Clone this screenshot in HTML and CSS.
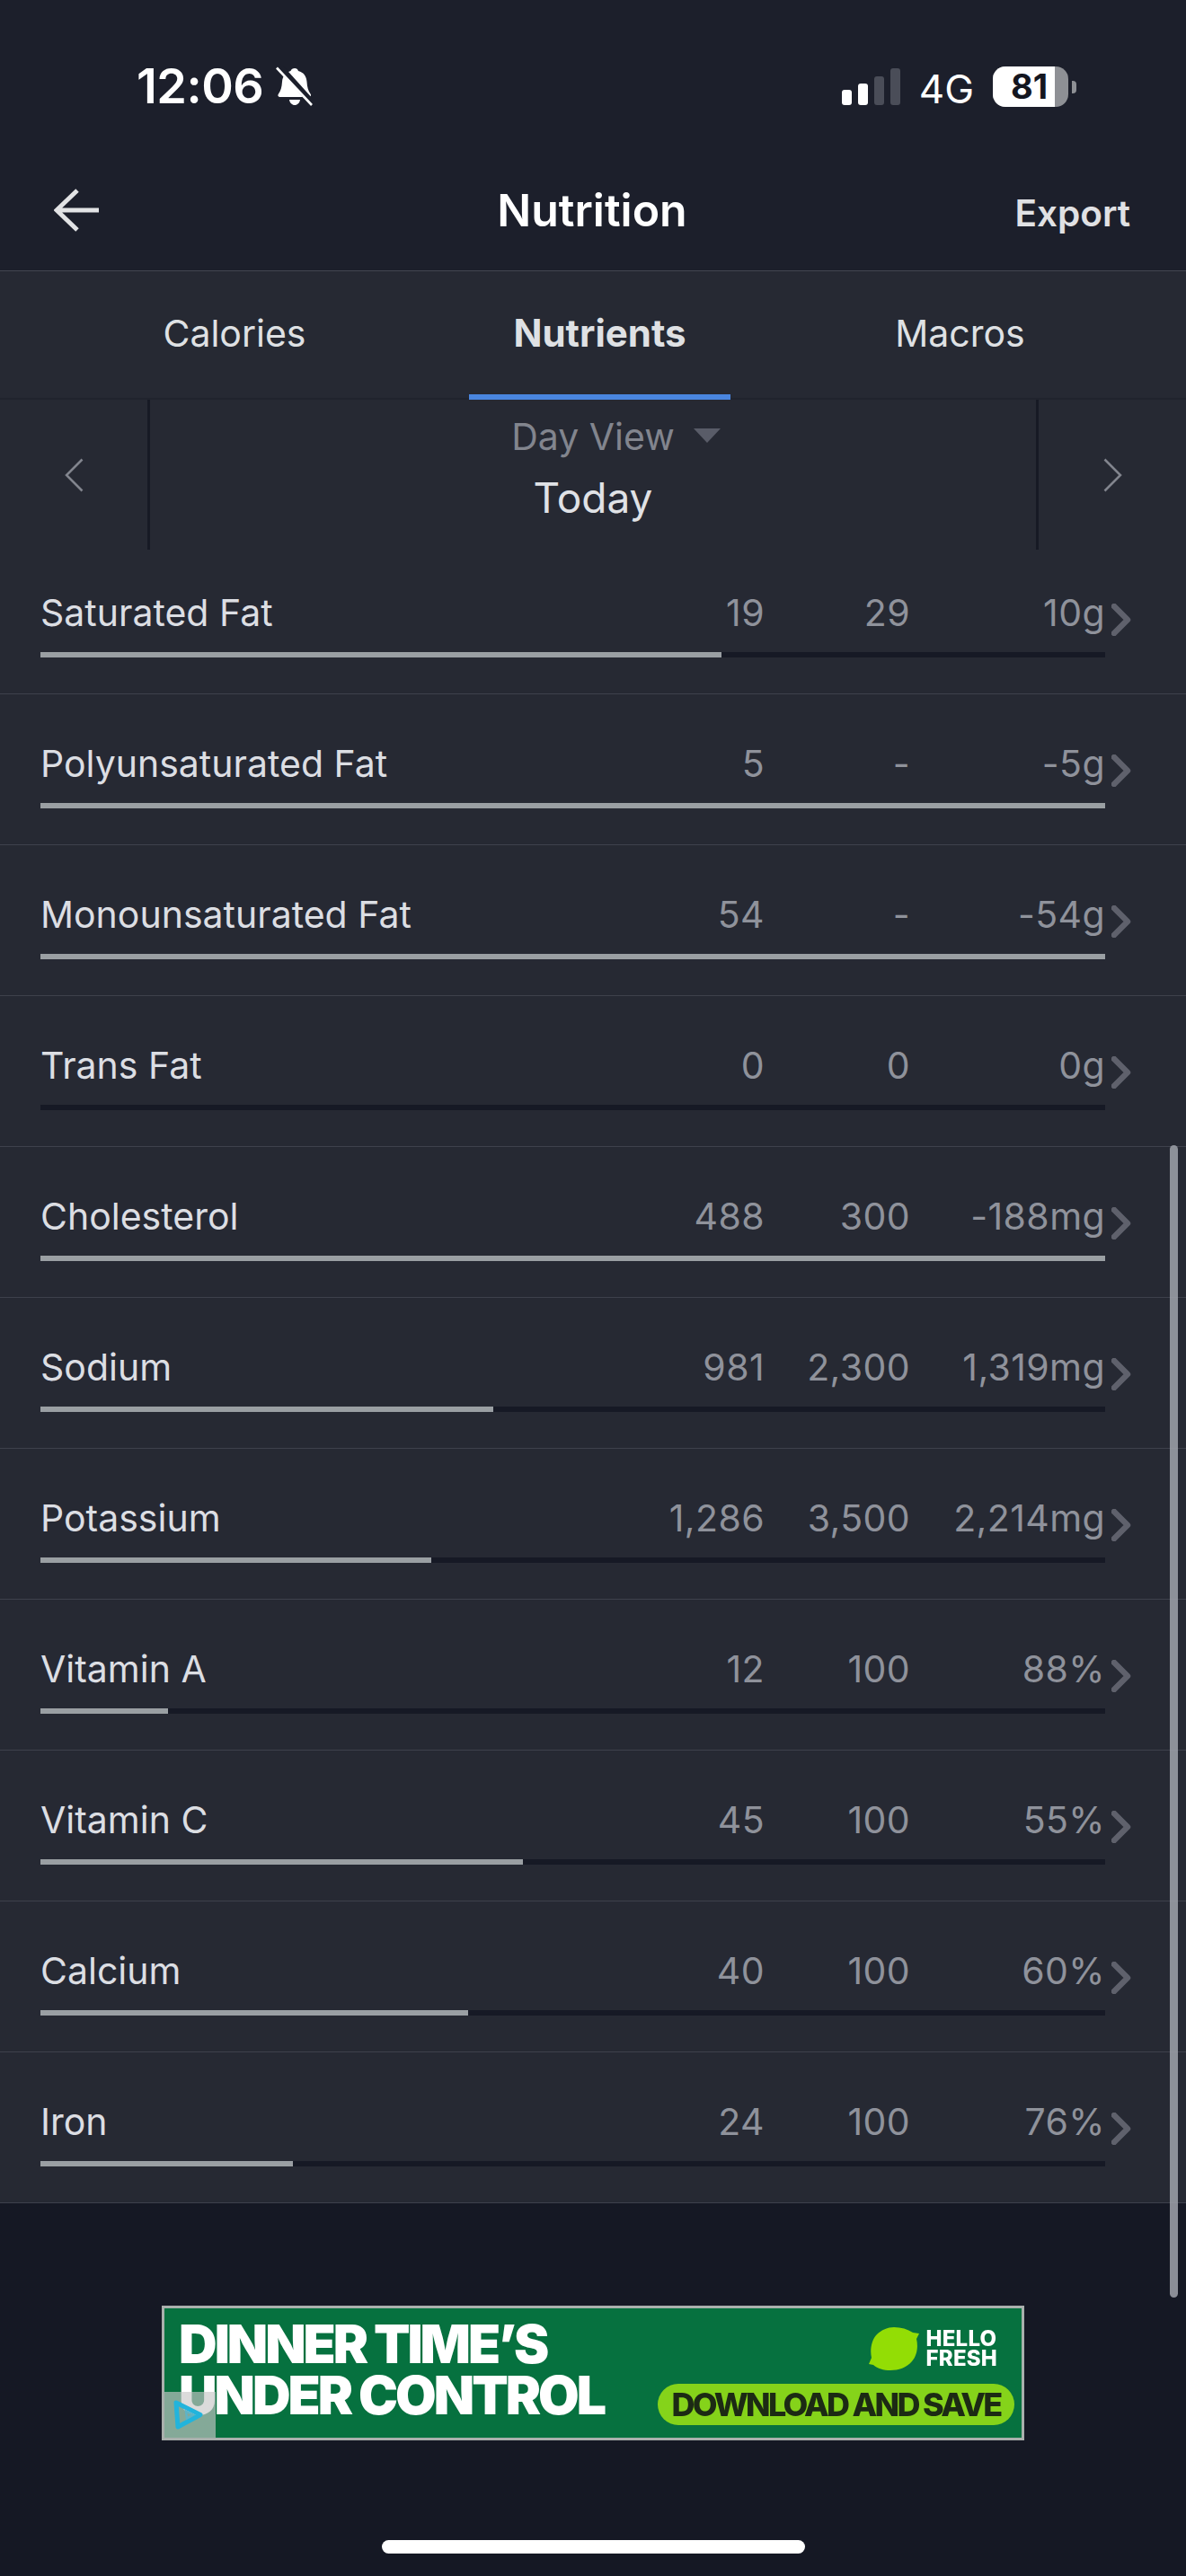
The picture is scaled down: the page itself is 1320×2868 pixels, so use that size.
FILE: index.html
```html
<!DOCTYPE html>
<html lang="en">
<head>
    <meta charset="UTF-8">
    <meta name="viewport" content="width=device-width, initial-scale=1.0">
    <title>Nutrition</title>
    <link rel="stylesheet" href="styles.css">
</head>
<body>
    <div class="app">
        <header class="header">
            <div class="status">
                <div class="status-left">
                    <span class="time">12:06</span>
                    <svg class="bell" viewBox="0 0 42 44">
                        <path d="M21 2c2 0 3.500 1 4 3 6 1.500 9 6 9.500 12 .4 6 1.500 10 4 13.500 1.500 2-.5 3.500-2 3.500H5c-2 0-3.500-1.500-2-3.500 2.500-3.500 3.600-7.500 4-13.500C7.500 11 11 6.500 16.500 5c.5-2 2.500-3 4.500-3z" fill="#fff"/>
                        <path d="M15 37h12c-.5 3.500-3 6-6 6s-5.500-2.500-6-6z" fill="#fff"/>
                        <path d="M4 0l37 41" stroke="#1c1f2b" stroke-width="7"/>
                        <path d="M1 1.500l39 41.500" stroke="#fff" stroke-width="2.600"/>
                    </svg>
                </div>
                <div class="status-right">
                    <div class="signal">
                        <span class="sig sig-1"></span>
                        <span class="sig sig-2"></span>
                        <span class="sig sig-3"></span>
                        <span class="sig sig-4"></span>
                    </div>
                    <span class="network">4G</span>
                    <div class="battery"><span class="battery-level">81</span></div>
                    <span class="battery-nub"></span>
                </div>
            </div>
            <div class="nav">
                <svg class="back" viewBox="0 0 50 48">
                    <path d="M26 2L3 24l23 22M3 24h47" fill="none" stroke="#e2e3e5" stroke-width="5"/>
                </svg>
                <h1 class="title">Nutrition</h1>
                <span class="export">Export</span>
            </div>
        </header>

        <nav class="tabs">
            <div class="tab tab-calories">Calories</div>
            <div class="tab tab-active">Nutrients</div>
            <div class="tab tab-macros">Macros</div>
        </nav>

        <div class="date-bar">
            <div class="date-btn date-prev">
                <svg class="date-arrow" viewBox="0 0 21 38"><path d="M19.500 1.500L2 19l17.500 17.500" /></svg>
            </div>
            <div class="date-info">
                <div class="date-view">Day View<span class="caret"></span></div>
                <div class="date-day">Today</div>
            </div>
            <div class="date-btn date-next">
                <svg class="date-arrow" viewBox="0 0 21 38"><path d="M1.500 1.500L19 19 1.500 36.500" /></svg>
            </div>
        </div>

        <div class="list">
            <div class="row row-first">
                <div class="row-text"><span class="name">Saturated Fat</span><span class="val">19</span><span class="val">29</span><span class="val val-left">10g</span></div>
                <svg class="chev" viewBox="0 0 22 36"><path d="M3 3l15 15L3 33"/></svg>
                <div class="bar"><div class="fill" style="width: 64%"></div></div>
            </div>
            <div class="row">
                <div class="row-text"><span class="name">Polyunsaturated Fat</span><span class="val">5</span><span class="val">-</span><span class="val val-left">-5g</span></div>
                <svg class="chev" viewBox="0 0 22 36"><path d="M3 3l15 15L3 33"/></svg>
                <div class="bar"><div class="fill" style="width: 100%"></div></div>
            </div>
            <div class="row">
                <div class="row-text"><span class="name">Monounsaturated Fat</span><span class="val">54</span><span class="val">-</span><span class="val val-left">-54g</span></div>
                <svg class="chev" viewBox="0 0 22 36"><path d="M3 3l15 15L3 33"/></svg>
                <div class="bar"><div class="fill" style="width: 100%"></div></div>
            </div>
            <div class="row">
                <div class="row-text"><span class="name">Trans Fat</span><span class="val">0</span><span class="val">0</span><span class="val val-left">0g</span></div>
                <svg class="chev" viewBox="0 0 22 36"><path d="M3 3l15 15L3 33"/></svg>
                <div class="bar"><div class="fill" style="width: 0%"></div></div>
            </div>
            <div class="row">
                <div class="row-text"><span class="name">Cholesterol</span><span class="val">488</span><span class="val">300</span><span class="val val-left">-188mg</span></div>
                <svg class="chev" viewBox="0 0 22 36"><path d="M3 3l15 15L3 33"/></svg>
                <div class="bar"><div class="fill" style="width: 100%"></div></div>
            </div>
            <div class="row">
                <div class="row-text"><span class="name">Sodium</span><span class="val">981</span><span class="val">2,300</span><span class="val val-left">1,319mg</span></div>
                <svg class="chev" viewBox="0 0 22 36"><path d="M3 3l15 15L3 33"/></svg>
                <div class="bar"><div class="fill" style="width: 42.5%"></div></div>
            </div>
            <div class="row">
                <div class="row-text"><span class="name">Potassium</span><span class="val">1,286</span><span class="val">3,500</span><span class="val val-left">2,214mg</span></div>
                <svg class="chev" viewBox="0 0 22 36"><path d="M3 3l15 15L3 33"/></svg>
                <div class="bar"><div class="fill" style="width: 36.7%"></div></div>
            </div>
            <div class="row">
                <div class="row-text"><span class="name">Vitamin A</span><span class="val">12</span><span class="val">100</span><span class="val val-left">88%</span></div>
                <svg class="chev" viewBox="0 0 22 36"><path d="M3 3l15 15L3 33"/></svg>
                <div class="bar"><div class="fill" style="width: 12%"></div></div>
            </div>
            <div class="row">
                <div class="row-text"><span class="name">Vitamin C</span><span class="val">45</span><span class="val">100</span><span class="val val-left">55%</span></div>
                <svg class="chev" viewBox="0 0 22 36"><path d="M3 3l15 15L3 33"/></svg>
                <div class="bar"><div class="fill" style="width: 45.3%"></div></div>
            </div>
            <div class="row">
                <div class="row-text"><span class="name">Calcium</span><span class="val">40</span><span class="val">100</span><span class="val val-left">60%</span></div>
                <svg class="chev" viewBox="0 0 22 36"><path d="M3 3l15 15L3 33"/></svg>
                <div class="bar"><div class="fill" style="width: 40.2%"></div></div>
            </div>
            <div class="row">
                <div class="row-text"><span class="name">Iron</span><span class="val">24</span><span class="val">100</span><span class="val val-left">76%</span></div>
                <svg class="chev" viewBox="0 0 22 36"><path d="M3 3l15 15L3 33"/></svg>
                <div class="bar"><div class="fill" style="width: 23.7%"></div></div>
            </div>
        </div>

        <div class="footer">
            <div class="ad">
                <div class="ad-headline">
                    <div>DINNER TIME’S</div>
                    <div>UNDER CONTROL</div>
                </div>
                <div class="ad-side">
                    <div class="ad-logo">
                        <svg class="ad-lime" viewBox="0 0 56 48">
                            <path d="M28 0c8 0 15 2 21 6l7 1-3 6c2 8 1 18-5 25-6 7-15 10-24 10-8 0-14-2-19-6L0 41l3-7C1 25 3 14 9 8c5-5 12-8 19-8z" fill="#93dd05"/>
                        </svg>
                        <span class="ad-brand">HELLO<br>FRESH</span>
                    </div>
                    <div class="ad-cta">DOWNLOAD AND SAVE</div>
                </div>
                <div class="ad-badge">
                    <svg viewBox="0 0 35 35">
                        <path d="M4 4l27 13.500L6 31z" fill="none" stroke="#22b4dc" stroke-width="5" stroke-linejoin="round"/>
                        <path d="M15 13.500l8 4-7 4z" fill="none" stroke="#5fb3c6" stroke-width="2.500"/>
                    </svg>
                </div>
            </div>
            <div class="home-bar"></div>
        </div>

        <div class="scrollbar"></div>
    </div>
</body>
</html>
```

FILE: styles.css
```css
* {
    box-sizing: border-box;
}

body {
    margin: 0;
    background-color: #151824;
    font-family: Inter, "Liberation Sans", sans-serif;
}

.app {
    position: relative;
    width: 1320px;
    height: 2868px;
    overflow: hidden;
}

/* header */
.header {
    height: 302px;
    background-color: #1c1f2b;
    border-bottom: 1px solid #434651;
}

.status {
    display: flex;
    justify-content: space-between;
    height: 190px;
    padding: 74px 122px 0 152px;
}

.status-left {
    display: flex;
    align-items: flex-start;
    gap: 14px;
}

.time {
    font-size: 54px;
    line-height: 44px;
    font-weight: 600;
    letter-spacing: -0.5px;
    color: #ffffff;
}

.bell {
    width: 42px;
    height: 44px;
}

.status-right {
    display: flex;
    align-items: flex-start;
}

.signal {
    display: flex;
    align-items: flex-end;
    gap: 7px;
    height: 41px;
    margin-top: 2px;
}

.sig {
    width: 11px;
    border-radius: 3px;
    background-color: #ffffff;
}

.sig-1 {
    height: 17px;
}

.sig-2 {
    height: 24px;
}

.sig-3 {
    height: 32px;
    background-color: #4a4d58;
}

.sig-4 {
    height: 41px;
    background-color: #4a4d58;
}

.network {
    margin: 8px 0 0 21px;
    font-size: 44px;
    line-height: 34px;
    color: #ffffff;
}

.battery {
    width: 84px;
    height: 45px;
    margin-left: 21px;
    border-radius: 14px;
    background-color: #8e9095;
}

.battery-level {
    display: block;
    width: 69px;
    height: 45px;
    padding-left: 12px;
    border-radius: 14px 0 0 14px;
    background-color: #ffffff;
    color: #14161f;
    font-size: 38px;
    line-height: 45px;
    font-weight: 700;
    text-align: center;
}

.battery-nub {
    width: 5px;
    height: 14px;
    margin: 16px 0 0 4px;
    border-radius: 0 4px 4px 0;
    background-color: #8e9095;
}

.nav {
    display: grid;
    grid-template-columns: 1fr auto 1fr;
    align-items: center;
    height: 84px;
    padding: 0 62px 0 60px;
    margin-top: 2px;
}

.back {
    width: 50px;
    height: 48px;
}

.title {
    margin: 0;
    font-size: 50px;
    font-weight: 600;
    color: #ffffff;
}

.export {
    justify-self: end;
    font-size: 40.500px;
    font-weight: 600;
    color: #e0e1e4;
    margin-top: 6px;
}

/* tabs */
.tabs {
    display: flex;
    height: 143px;
    background-color: #262933;
    border-bottom: 2px solid #20232d;
    font-size: 41px;
    line-height: 50px;
    color: #dfe1e4;
}

.tab {
    padding-top: 44px;
    text-align: center;
}

.tab-calories {
    width: 522px;
}

.tab-active {
    width: 291px;
    height: 143px;
    border-bottom: 6px solid #4a86e0;
    font-size: 42px;
    font-weight: 700;
}

.tab-macros {
    flex: 1;
    padding-left: 4px;
}

/* date switcher */
.date-bar {
    display: grid;
    grid-template-columns: 167px 1fr 167px;
    height: 167px;
    background-color: #262933;
}

.date-btn {
    display: flex;
    align-items: center;
    justify-content: center;
}

.date-prev {
    border-right: 3px solid #171a25;
}

.date-next {
    border-left: 3px solid #171a25;
}

.date-arrow {
    width: 21px;
    height: 38px;
}

.date-arrow path {
    fill: none;
    stroke: #82858e;
    stroke-width: 2.500;
}

.date-info {
    text-align: center;
}

.date-view {
    margin-top: 16px;
    font-size: 41px;
    line-height: 50px;
    color: #82858e;
}

/* hangs off the text so the label itself stays centred */
.caret {
    display: inline-block;
    width: 0;
    height: 0;
    margin: 0 -51px 0 21px;
    vertical-align: 8px;
    border-left: 15px solid transparent;
    border-right: 15px solid transparent;
    border-top: 16px solid #595c68;
}

.date-day {
    margin-top: 15px;
    font-size: 46px;
    line-height: 56px;
    color: #e0e2e6;
}

/* nutrient rows */
.list {
    background-color: #262933;
}

.row {
    display: grid;
    grid-template-columns: 1185px 22px;
    column-gap: 7px;
    height: 168px;
    padding: 52px 0 0 45px;
    border-bottom: 1px solid #3e414c;
    align-content: start;
}

.row-first {
    height: 161px;
    padding-top: 45px;
}

.row-text {
    display: flex;
    height: 50px;
    font-size: 41px;
    line-height: 50px;
    color: #8f929b;
}

.name {
    flex: 1;
    color: #dcdee3;
}

.val {
    width: 162px;
    letter-spacing: 0.4px;
    text-align: right;
}

.val-left {
    width: 217px;
}

.chev {
    width: 22px;
    height: 36px;
    margin-top: 15px;
}

.chev path {
    fill: none;
    stroke: #5f616c;
    stroke-width: 6.500;
    stroke-linecap: round;
    stroke-linejoin: round;
}

.bar {
    grid-column: 1;
    grid-row: 2;
    height: 6px;
    margin-top: 18px;
    background-color: #161925;
}

.fill {
    height: 6px;
    background-color: #9a9fa3;
}

/* banner */
.footer {
    display: flex;
    flex-direction: column;
    align-items: center;
    padding-top: 114px;
}

.ad {
    position: relative;
    display: flex;
    justify-content: space-between;
    width: 960px;
    height: 150px;
    padding: 0 8px 0 16px;
    border: 3px solid #a9b0ad;
    background-color: #06713f;
}

.ad-headline {
    padding-top: 11px;
    font-size: 59px;
    line-height: 57px;
    font-weight: 900;
    letter-spacing: -3px;
    color: #ffffff;
    filter: blur(0.6px);
}

.ad-side {
    display: flex;
    flex-direction: column;
    align-items: flex-end;
}

.ad-logo {
    display: flex;
    gap: 8px;
    margin: 21px 19px 0 0;
    height: 63px;
    filter: blur(0.6px);
}

.ad-lime {
    width: 56px;
    height: 48px;
}

.ad-brand {
    margin-top: 2px;
    font-size: 24px;
    line-height: 22px;
    font-weight: 800;
    letter-spacing: 0.2px;
    color: #ffffff;
}

.ad-cta {
    width: 397px;
    height: 46px;
    border-radius: 23px;
    background-color: #85d31a;
    color: #1c2a14;
    font-size: 36px;
    line-height: 46px;
    font-weight: 800;
    letter-spacing: -2.700px;
    text-align: center;
    filter: blur(0.5px);
}

.ad-badge {
    position: absolute;
    left: 0;
    bottom: 0;
    display: flex;
    align-items: center;
    padding-left: 9px;
    width: 57px;
    height: 51px;
    background-color: rgba(200, 200, 200, 0.65);
}

.ad-badge svg {
    width: 35px;
    height: 35px;
}

.home-bar {
    width: 471px;
    height: 15px;
    margin-top: 111px;
    border-radius: 8px;
    background-color: #ffffff;
}

/* scroll indicator sits over the list */
.scrollbar {
    position: absolute;
    left: 1302px;
    top: 1275px;
    width: 9px;
    height: 1283px;
    border-radius: 5px;
    background-color: rgba(160, 163, 172, 0.85);
}
```
